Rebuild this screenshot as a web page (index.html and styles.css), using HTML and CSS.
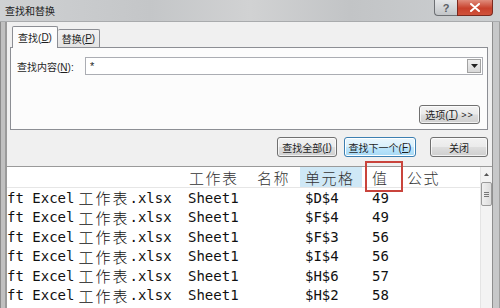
FILE: index.html
```html
<!DOCTYPE html>
<html>
<head>
<meta charset="utf-8">
<link rel="stylesheet" href="styles.css">
</head>
<body>
<div class="win">
  <div class="titlebar">
    <span class="title">查找和替换</span>
    <div class="caption-btns">
      <span class="cap help">?</span>
      <span class="cap close"><svg width="12" height="9" viewBox="0 0 12 9"><path d="M2 1 L10 8 M10 1 L2 8" stroke="#fff" stroke-width="2" stroke-linecap="round"/></svg></span>
    </div>
  </div>
  <div class="main">
    <div class="dialog">
      <div class="tabs">
        <div class="tab active">查找(<u>D</u>)</div>
        <div class="tab">替换(<u>P</u>)</div>
      </div>
      <div class="panel">
        <div class="find-row">
          <span class="label">查找内容(<u>N</u>):</span>
          <div class="combo">
            <span class="val">*</span>
            <span class="drop"><svg width="7" height="4" viewBox="0 0 7 4"><path d="M0 0 H7 L3.5 4 Z" fill="#222"/></svg></span>
          </div>
        </div>
        <button class="btn opt">选项(<u>T</u>) <span class="gg">&gt;&gt;</span></button>
      </div>
      <div class="actions">
        <button class="btn w-all">查找全部(<u>I</u>)</button>
        <button class="btn focus w-next">查找下一个(<u>F</u>)</button>
        <button class="btn w-close">关闭</button>
      </div>
    </div>
    <div class="results">
      <div class="grid">
        <div class="hd c1"></div>
        <div class="hd c2">工作表</div>
        <div class="hd c3">名称</div>
        <div class="hd c4 sel">单元格</div>
        <div class="hd c5">值</div>
        <div class="hd c6">公式</div>

        <div class="cell c1">ft Excel <span class="cj">工作表</span>.xlsx</div>
        <div class="cell c2">Sheet1</div><div class="cell c3"></div><div class="cell c4">$D$4</div><div class="cell c5">49</div><div class="cell c6"></div>

        <div class="cell c1">ft Excel <span class="cj">工作表</span>.xlsx</div>
        <div class="cell c2">Sheet1</div><div class="cell c3"></div><div class="cell c4">$F$4</div><div class="cell c5">49</div><div class="cell c6"></div>

        <div class="cell c1">ft Excel <span class="cj">工作表</span>.xlsx</div>
        <div class="cell c2">Sheet1</div><div class="cell c3"></div><div class="cell c4">$F$3</div><div class="cell c5">56</div><div class="cell c6"></div>

        <div class="cell c1">ft Excel <span class="cj">工作表</span>.xlsx</div>
        <div class="cell c2">Sheet1</div><div class="cell c3"></div><div class="cell c4">$I$4</div><div class="cell c5">56</div><div class="cell c6"></div>

        <div class="cell c1">ft Excel <span class="cj">工作表</span>.xlsx</div>
        <div class="cell c2">Sheet1</div><div class="cell c3"></div><div class="cell c4">$H$6</div><div class="cell c5">57</div><div class="cell c6"></div>

        <div class="cell c1">ft Excel <span class="cj">工作表</span>.xlsx</div>
        <div class="cell c2">Sheet1</div><div class="cell c3"></div><div class="cell c4">$H$2</div><div class="cell c5">58</div><div class="cell c6"></div>
      </div>
      <div class="scrollbar">
        <div class="sb-up"><svg width="5" height="3" viewBox="0 0 5 3"><path d="M0 3 L2.5 0 L5 3 Z" fill="#555"/></svg></div>
        <div class="sb-thumb"><span></span><span></span><span></span></div>
      </div>
    </div>
  </div>
  <div class="annot"></div>
</div>
</body>
</html>
```
FILE: styles.css
```css
* { box-sizing: border-box; }
html, body { margin: 0; padding: 0; }
body {
  width: 500px;
  height: 308px;
  overflow: hidden;
  font-family: "Liberation Sans", "Noto Sans CJK SC", sans-serif;
  font-size: 10px;
  color: #1e1e1e;
}
.win {
  position: relative;
  width: 500px;
  height: 308px;
  display: flex;
  flex-direction: column;
  background: #c6c8ca;
}
.titlebar {
  height: 22px;
  display: flex;
  justify-content: space-between;
  align-items: flex-start;
  padding: 0 7px 0 5px;
  background: linear-gradient(90deg, #cfd1d3 0%, #c4c6c8 30%, #d1d2d3 50%, #c2c4c6 70%, #cdd0d2 100%);
  border-bottom: 1px solid #a9abad;
}
.title {
  margin-top: 5px;
  font-size: 10px;
  color: #222;
  font-family: "Noto Sans CJK SC", sans-serif;
  line-height: 12px;
}
.caption-btns { display: flex; }
.cap {
  height: 16px;
  display: flex;
  align-items: center;
  justify-content: center;
  border: 1px solid #6d7074;
  border-top: none;
}
.help {
  width: 23px;
  border-radius: 0 0 0 4px;
  border-right: none;
  background: linear-gradient(#e4e6e8, #c2c5c8);
  color: #5a5f65;
  font-size: 11px;
  font-weight: bold;
}
.close {
  width: 36px;
  border-radius: 0 0 4px 0;
  background: linear-gradient(#e08c7c, #c8412c 55%, #d0523b);
  border-color: #7b2a1f;
}
.main {
  flex: 1;
  display: flex;
  flex-direction: column;
  padding: 0 8px 0 7px;
  background:
    linear-gradient(90deg, #8b8b8b 0 1px, #c0c0c0 1px 5px, #9a9a9a 5px 7px, transparent 7px) left top / 7px 100% no-repeat,
    linear-gradient(90deg, #8e8e8e 0 1px, #c7c8c9 1px 7px, #a0a0a0 7px 8px) right top / 8px 100% no-repeat,
    #c6c8ca;
}
.dialog {
  height: 144px;
  background: #f0f0f0;
  display: flex;
  flex-direction: column;
  padding: 3px 4px 0 3px;
}
.tabs {
  display: flex;
  align-items: flex-end;
  padding-left: 2px;
  height: 22px;
  position: relative;
  z-index: 1;
}
.tab {
  height: 18px;
  display: flex;
  align-items: center;
  justify-content: center;
  white-space: nowrap;
  border: 1px solid #8c8e94;
  border-bottom: none;
  border-left: none;
  border-radius: 2px 2px 0 0;
  background: linear-gradient(#f2f2f2, #e3e3e3);
  width: 42px;
}
.tab.active {
  height: 22px;
  width: 46px;
  border-left: 1px solid #8c8e94;
  background: #fcfcfc;
  margin-bottom: -1px;
}
.panel {
  height: 83px;
  background: #fcfcfc;
  border: 1px solid #8c8e94;
  display: flex;
  flex-direction: column;
  padding: 9px 4px 5px 6px;
}
.find-row {
  display: flex;
  align-items: center;
  gap: 6px;
}
.label { width: 62px; white-space: nowrap; }
.combo {
  flex: 1;
  height: 18px;
  border: 1px solid #abadb3;
  background: #fff;
  display: flex;
  align-items: stretch;
  justify-content: space-between;
  padding-left: 4px;
}
.val { font-size: 11px; line-height: 16px; }
.drop {
  width: 14px;
  margin: 1px;
  border: 1px solid #a2a2a2;
  background: linear-gradient(#f0f0f0, #d8d8d8);
  display: flex;
  align-items: center;
  justify-content: center;
}
.btn {
  font: inherit;
  color: #1e1e1e;
  height: 20px;
  border: 1px solid #707070;
  border-radius: 3px;
  background: linear-gradient(#f2f2f2 0%, #ebebeb 48%, #dddddd 52%, #cfcfcf 100%);
  box-shadow: inset 0 0 0 1px rgba(255,255,255,0.7);
  padding: 0;
  white-space: nowrap;
  display: flex;
  align-items: center;
  justify-content: center;
}
.opt {
  margin-top: auto;
  align-self: flex-end;
  width: 61px;
  height: 19px;
  margin-right: 3px;
}
.gg { margin-left: 3px; font-size: 9px; letter-spacing: 1px; }
.actions {
  display: flex;
  justify-content: flex-end;
  margin-top: 7px;
  gap: 7px;
}
.w-all { width: 60px; }
.w-next { width: 72px; }
.w-close { width: 58px; margin-left: 7px; }
.btn.focus {
  border-color: #3c7fb1;
  background: linear-gradient(#eaf6fd 0%, #d9f0fc 48%, #bee6fd 52%, #a7d9f5 100%);
  box-shadow: inset 0 0 0 1px #fff;
}
.results {
  flex: 1;
  display: flex;
  background: #fff;
  border-top: 1px solid #9a9a9a;
  overflow: hidden;
}
.grid {
  flex: 1;
  display: grid;
  grid-template-columns: 178px 67px 48px 62px 41px 1fr;
  grid-template-rows: 21px repeat(6, 19.5px);
  align-content: start;
  font-family: "DejaVu Sans Mono", monospace;
  font-size: 14px;
  color: #111;
}
.hd {
  font-family: "Noto Sans CJK SC", sans-serif;
  font-size: 15px;
  font-weight: 300;
  letter-spacing: 1.5px;
  color: #333;
  border-bottom: 1px solid #e6e6e6;
  display: flex;
  align-items: center;
  line-height: 1;
}
.hd.sel { background: #cfe8f6; }
.cell {
  display: flex;
  align-items: center;
  white-space: nowrap;
}
.c1 { padding-left: 0; }
.c2 { padding-left: 3px; }
.hd.c2 { padding-left: 4px; }
.c3 { padding-left: 5px; }
.c4 { padding-left: 5px; }
.c5 { padding-left: 10px; }
.c6 { padding-left: 4px; }
.cj {
  font-family: "Noto Sans CJK SC", sans-serif;
  font-size: 15px;
  font-weight: 300;
  letter-spacing: 2px;
  margin-left: 4px;
}
.scrollbar {
  width: 12px;
  background: #f3f3f3;
  border-left: 1px solid #e4e4e4;
  display: flex;
  flex-direction: column;
  align-items: center;
}
.sb-up {
  height: 15px;
  width: 100%;
  display: flex;
  align-items: center;
  justify-content: center;
}
.sb-thumb {
  width: 11px;
  height: 24px;
  border: 1px solid #9a9a9a;
  border-radius: 2px;
  background: linear-gradient(90deg, #f0f0f0, #dcdcdc);
  display: flex;
  flex-direction: column;
  align-items: center;
  justify-content: center;
  gap: 1px;
}
.sb-thumb span {
  width: 5px;
  height: 1px;
  background: #777;
}
.annot {
  position: absolute;
  left: 365px;
  top: 161px;
  width: 38px;
  height: 31px;
  border: 2px solid #c9443c;
}
```
